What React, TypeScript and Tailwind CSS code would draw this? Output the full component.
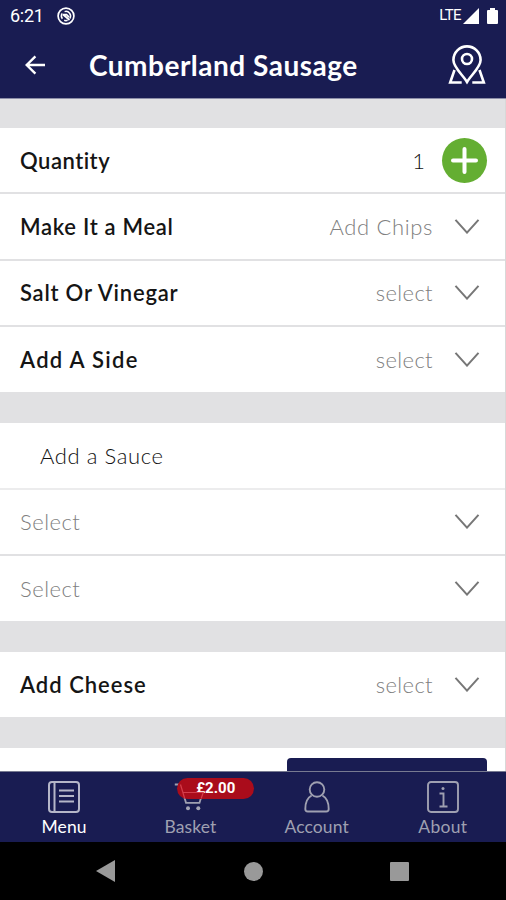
import clsx from 'clsx';

interface OptionRowProps {
  label: string;
  value?: string;
  labelClass: string;
  valueClass?: string;
  last?: boolean;
}

function Chevron() {
  return (
    <svg className="h-[15px] w-[26px] shrink-0" viewBox="0 0 26 15" fill="none" stroke="#777" strokeWidth="2">
      <path d="M1.5.8 13 13.6 24.5.8" />
    </svg>
  );
}

function OptionRow({ label, value, labelClass, valueClass, last }: OptionRowProps) {
  return (
    <div
      className={clsx(
        'flex items-center border-[#e1e1e3] pr-[25px] pl-5',
        last ? 'h-[65px]' : 'h-[66.5px] border-b-2',
      )}
    >
      <span className={clsx('flex-1 text-[22px]', labelClass)}>{label}</span>
      {value && (
        <span className={clsx('mr-[21px] text-[22px] font-light text-[#808080]', valueClass)}>{value}</span>
      )}
      <Chevron />
    </div>
  );
}

function StatusBar() {
  return (
    <div className="flex h-[31px] items-center pr-2 pl-[10px] font-[Roboto,sans-serif] text-white">
      <span className="w-[47px] text-[18px] tracking-[-0.3px]">6:21</span>
      <svg className="h-[18px] w-[18px]" viewBox="0 0 18 18" fill="none" stroke="#fff">
        <circle cx="9" cy="9" r="7.9" strokeWidth="1.7" />
        <path d="M5.4 11.8A4.6 4.6 0 0 1 5.2 6.4M7.6 4.6a4.6 4.6 0 0 1 5.2 6.900M10.600 13.300a4.600 4.600 0 0 1-3.400 0" strokeWidth="1.500" />
        <path d="m6 7.500 6.500 5.500M6 7.600h3.500l2.500 2.500" strokeWidth="1.700" />
      </svg>
      <span className="ml-auto text-[15px] tracking-[-0.6px]">LTE</span>
      <svg className="ml-[2px] h-4 w-4" viewBox="0 0 16 16" fill="#fff">
        <path d="M16 0v16H0z" />
      </svg>
      <svg className="ml-2 h-4 w-[11px]" viewBox="0 0 11 16" fill="#fff">
        <path d="M3 0h5v2h2q1 0 1 1v12q0 1-1 1H1q-1 0-1-1V3q0-1 1-1h2z" />
      </svg>
    </div>
  );
}

function Header() {
  return (
    <div className="flex h-[67px] items-center pr-5 pl-[25px] text-white">
      <svg className="h-5 w-5" viewBox="0 0 20 20" fill="none" stroke="#fff" strokeWidth="2.4">
        <path d="M20 10H1.8M10.4 1.3 1.7 10l8.7 8.7" />
      </svg>
      <h1 className="ml-11 flex-1 text-[28px] leading-9 font-bold tracking-[0.5px]">
        Cumberland Sausage
      </h1>
      <svg className="h-10 w-[38px]" viewBox="0 0 38 40" fill="none" stroke="#fff" strokeWidth="2.6">
        <path d="M19 37C15 30 5.4 22.5 5.4 15a13.6 13.6 0 0 1 27.2 0C32.6 22.5 23 30 19 37Z" />
        <circle cx="19" cy="14" r="5" />
        <path d="M6.5 25 2.200 37.500h11.500M31.500 25l4.300 12.500H24.300" />
      </svg>
    </div>
  );
}

function MenuIcon() {
  return (
    <svg className="h-8 w-8" viewBox="0 0 32 32" fill="none" stroke="#b5b6c8" strokeWidth="2">
      <rect x="1" y="1" width="30" height="30" rx="3" />
      <path d="M6.5 1v30M11 9.5h15M11 15h15M11 20.5h15" />
    </svg>
  );
}

function BasketIcon() {
  return (
    <svg className="h-8 w-8" viewBox="0 0 32 32" fill="none" stroke="#9fa0b1" strokeWidth="1.8">
      <path d="M.8 3.5h5.7L12 21.8h13.5l3-9.8" />
      <circle cx="14" cy="27.300" r="2" fill="#a5a6b6" stroke="none" />
      <circle cx="24.300" cy="27.300" r="2" fill="#a5a6b6" stroke="none" />
    </svg>
  );
}

function AccountIcon() {
  return (
    <svg className="h-8 w-8" viewBox="0 0 32 32" fill="none" stroke="#9fa0b1" strokeWidth="1.9">
      <circle cx="16" cy="8.5" r="7.3" />
      <path d="M10.6 14.5C6 17 4.3 21.5 4.3 28q0 2.5 2.5 2.5h18.400q2.500 0 2.500-2.500c0-6.500-1.700-11-6.300-13.500" />
    </svg>
  );
}

function AboutIcon() {
  return (
    <svg className="h-8 w-8" viewBox="0 0 32 32" fill="none" stroke="#9fa0b1" strokeWidth="1.9">
      <rect x="1" y="1" width="30" height="30" rx="3" />
      <path d="M12.500 12.500h4V25M12.500 25.500h8" />
      <circle cx="16" cy="7.500" r="1.500" fill="#9fa0b1" stroke="none" />
    </svg>
  );
}

const tabs = [
  { name: 'Menu', icon: <MenuIcon />, className: 'text-white tracking-[0.1px]' },
  { name: 'Basket', icon: <BasketIcon />, className: 'text-[#9fa0b1] tracking-[0.1px]', badge: '£2.00' },
  { name: 'Account', icon: <AccountIcon />, className: 'text-[#9fa0b1] tracking-[0.1px]' },
  { name: 'About', icon: <AboutIcon />, className: 'text-[#9fa0b1] tracking-[0.3px]' },
];

function TabBar() {
  return (
    <nav className="grid h-[71px] grid-cols-4 border-t border-[#777a91] bg-[#191c52] pl-px">
      {tabs.map((tab) => (
        <div key={tab.name} className="relative flex flex-col items-center pt-[9px]">
          {tab.icon}
          <span className={clsx('mt-[2px] text-[17.5px] leading-6', tab.className)}>{tab.name}</span>
          {tab.badge && (
            <>
              <span className="absolute top-[6px] left-[50px] flex h-[21px] w-[77px] items-center justify-center rounded-full bg-[#aa0c1b] font-[Roboto,sans-serif] text-[15px] font-bold text-white">
                {tab.badge}
              </span>
              {/* basket outline showing through the badge */}
              <svg className="absolute top-[9px] left-[47px] h-8 w-8" viewBox="0 0 32 32" fill="none" stroke="#d53e4b" strokeWidth="1.2">
                <path d="m6.500 3.500 4.200 14M9.200 11.500h20l-2 6" />
              </svg>
            </>
          )}
        </div>
      ))}
    </nav>
  );
}

function AndroidNav() {
  return (
    <div className="flex h-[58px] items-center justify-between bg-black pr-[97px] pl-[96px]">
      <svg className="h-[22px] w-[19px]" viewBox="0 0 19 22" fill="#999">
        <path d="M19 0v22L0 11z" />
      </svg>
      <div className="ml-[2px] h-[19px] w-[19px] rounded-full bg-[#999]" />
      <div className="h-[19px] w-[19px] rounded-[1px] bg-[#999]" />
    </div>
  );
}

export default function App() {
  const bold = 'font-semibold text-[#151515]';
  const muted = 'font-light text-[#808080] tracking-[0.5px]';
  return (
    <div className="flex h-[900px] w-[506px] flex-col overflow-hidden bg-[#e1e1e3] font-[Lato,sans-serif]">
      <header className="h-[99px] shrink-0 border-b border-[#8d8ea8] bg-[#191c52]">
        <StatusBar />
        <Header />
      </header>

      <main className="flex h-[672px] shrink-0 flex-col overflow-hidden border-r border-[#d8d8d8]">
        <section className="mt-[29px] bg-white">
          <div className="flex h-[66px] items-center border-b-2 border-[#e1e1e3] pr-[18px] pl-5">
            <span className={clsx('flex-1 text-[22px] tracking-[0.5px]', bold)}>Quantity</span>
            <span className="mr-[17px] text-[22px] font-light text-[#111]">1</span>
            <button className="flex h-[45px] w-[45px] items-center justify-center rounded-full bg-[#64ae32]">
              <svg className="h-[27px] w-[27px]" viewBox="0 0 27 27" stroke="#fff" strokeWidth="4" strokeLinecap="round">
                <path d="M13.5 2v23M2 13.5h23" />
              </svg>
            </button>
          </div>
          <OptionRow label="Make It a Meal" value="Add Chips" labelClass={clsx(bold, 'tracking-[0.7px]')} valueClass="tracking-[0.65px]" />
          <OptionRow label="Salt Or Vinegar" value="select" labelClass={clsx(bold, 'tracking-[0.77px]')} valueClass="tracking-[0.35px]" />
          <OptionRow label="Add A Side" value="select" labelClass={clsx(bold, 'tracking-[1.3px]')} valueClass="tracking-[0.35px]" last />
        </section>

        <section className="mt-[31px] bg-white">
          <div className="flex h-[66.5px] items-center border-b-2 border-[#ececed] pl-10 text-[22px] font-light tracking-[0.6px] text-[#111]">
            Add a Sauce
          </div>
          <OptionRow label="Select" labelClass={muted} />
          <OptionRow label="Select" labelClass={muted} last />
        </section>

        <section className="mt-[31px] bg-white">
          <OptionRow label="Add Cheese" value="select" labelClass={clsx(bold, 'tracking-[1px]')} valueClass="tracking-[0.35px]" last />
        </section>

        <section className="mt-[31px] flex flex-1 justify-end bg-white pt-[10px] pr-[18px]">
          <div className="w-[200px] rounded-t-[4px] bg-[#191c52]" />
        </section>
      </main>

      <TabBar />
      <AndroidNav />
    </div>
  );
}
